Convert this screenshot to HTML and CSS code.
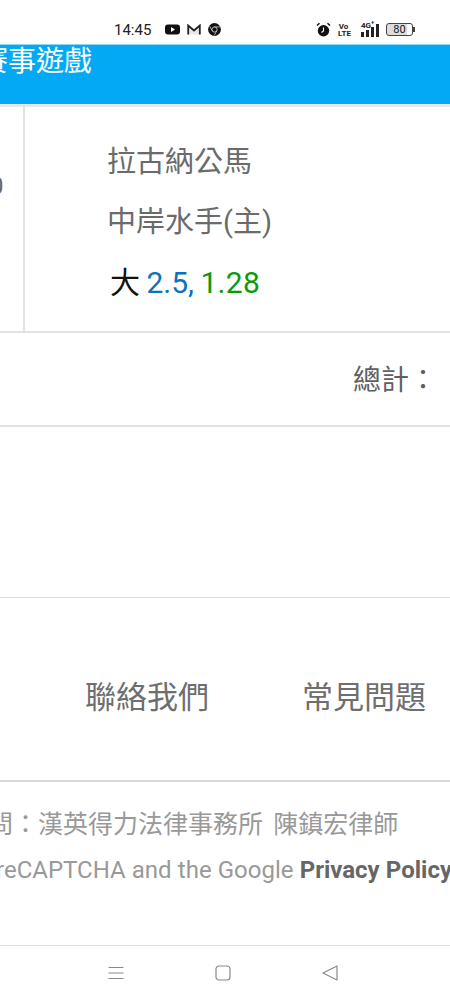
FILE: index.html
```html
<!DOCTYPE html>
<html lang="zh-Hant">

<head>
    <meta charset="UTF-8">
    <meta name="viewport" content="width=device-width, initial-scale=1.0">
    <title>賽事遊戲</title>
    <link rel="stylesheet" href="styles.css">
</head>

<body>
    <div class="phone">
        <div class="statusBar">
            <span class="time">14:45</span>
            <svg class="appIcon ytIcon" width="15" height="11" viewBox="0 0 15 11">
                <rect x="0" y="0.5" width="15" height="10" rx="3" fill="#111" />
                <path d="M6 3 L10 5.5 L6 8 Z" fill="#fff" />
            </svg>
            <svg class="appIcon gmailIcon" width="14" height="11" viewBox="0 0 14 11">
                <path d="M1.2 10.5 V1.5 L7 6.5 L12.8 1.5 V10.5" fill="#e8e8e8" stroke="#222" stroke-width="1.8" />
            </svg>
            <svg class="appIcon chromeIcon" width="13" height="13" viewBox="0 0 13 13">
                <circle cx="6.5" cy="6.5" r="6.4" fill="#111" />
                <circle cx="6.5" cy="6.5" r="2.6" fill="#111" stroke="#ccc" stroke-width="0.9" />
                <path d="M6.5 3.9 H12 M4.2 7.8 L1.6 3.2 M8.8 7.8 L6.2 12.4" stroke="#ccc" stroke-width="0.8" />
            </svg>
            <span class="spacer"></span>
            <svg class="sysIcon" width="15" height="15" viewBox="0 0 15 15">
                <circle cx="7.5" cy="8.8" r="5.7" fill="#111" />
                <path d="M1 3.5 L3.5 1.2 M14 3.5 L11.5 1.2" stroke="#111" stroke-width="1.5" />
                <path d="M7.5 5.5 V9 L5.5 10.5" stroke="#fff" stroke-width="1.1" fill="none" />
            </svg>
            <span class="volte">Vo<br>LTE</span>
            <span class="signal">
                <span class="netType">4G<sup class="netPlus">+</sup></span>
                <svg width="19" height="13" viewBox="0 0 19 13">
                    <rect x="0" y="8" width="3" height="5" fill="#222" />
                    <rect x="5" y="6" width="3" height="7" fill="#222" />
                    <rect x="10" y="3" width="3" height="10" fill="#222" />
                    <rect x="15" y="0" width="3" height="13" fill="#222" />
                </svg>
            </span>
            <span class="battery"><span class="batteryLevel">80</span></span>
            <span class="batteryNub"></span>
        </div>

        <div class="header">
            <h1 class="headerTitle">賽事遊戲</h1>
        </div>

        <div class="betRow">
            <div class="sideCell"><span class="cutNum">0</span></div>
            <div class="betCell">
                <p class="teamName">拉古納公馬</p>
                <p class="teamName">中岸水手(主)</p>
                <p class="odds">大 <span class="oddsBlue">2.5,</span> <span class="oddsGreen">1.28</span></p>
            </div>
        </div>

        <div class="totalRow">總計：</div>
        <div class="emptyRow"></div>

        <div class="footerLinks">
            <a class="footerLink">聯絡我們</a>
            <a class="footerLink">常見問題</a>
        </div>

        <div class="legal">
            <p class="legalLine legalCn">問：漢英得力法律事務所 陳鎮宏律師</p>
            <p class="legalLine legalEn">reCAPTCHA and the Google <b>Privacy Policy</b></p>
        </div>

        <div class="navBar">
            <svg width="16" height="14" viewBox="0 0 16 14">
                <path d="M0.5 1.5 H15.5 M0.5 7 H15.5 M0.5 12.5 H15.5" stroke="#8a8a8a" stroke-width="1" />
            </svg>
            <svg width="16" height="16" viewBox="0 0 16 16">
                <rect x="1" y="1" width="14" height="14" rx="3" fill="none" stroke="#8a8a8a" stroke-width="1.2" />
            </svg>
            <svg width="16" height="16" viewBox="0 0 16 16">
                <path d="M15 1 V15 L1 8 Z" fill="none" stroke="#8a8a8a" stroke-width="1.2" stroke-linejoin="round" />
            </svg>
        </div>
    </div>
</body>

</html>
```

FILE: styles.css
```css
* {
    box-sizing: border-box;
}

html,
body {
    margin: 0;
    padding: 0;
}

body {
    font-family: Roboto, "Noto Sans CJK TC", sans-serif;
    background-color: #fff;
    overflow: hidden;
}

p {
    margin: 0;
}

.phone {
    width: 450px;
    height: 1000px;
    display: flex;
    flex-direction: column;
    overflow: hidden;
}

.statusBar {
    height: 44px;
    padding: 16px 35px 0 114px;
    display: flex;
    align-items: center;
    color: #222;
}

.time {
    font-size: 15px;
    width: 51px;
}

.appIcon {
    margin-right: 7px;
}

.spacer {
    flex: 1;
}

.sysIcon {
    margin-right: 7px;
}

.volte {
    font-size: 8px;
    line-height: 7px;
    font-weight: 700;
    text-align: center;
    width: 11px;
    margin-right: 12px;
}

.signal {
    display: flex;
    align-items: flex-end;
    margin-right: 6px;
}

.netType {
    font-size: 8px;
    font-weight: 700;
    line-height: 8px;
    width: 0;
    margin-bottom: 7px;
    white-space: nowrap;
}

.netPlus {
    font-size: 6px;
    line-height: 0;
}

.battery {
    width: 27px;
    height: 13px;
    border: 1px solid #444;
    border-radius: 3px;
    background: linear-gradient(to right, #ddd 80%, #fff 80%);
    font-size: 11px;
    line-height: 11px;
    text-align: center;
}

.batteryNub {
    width: 2px;
    height: 5px;
    background-color: #444;
}

.header {
    height: 60px;
    background-color: #03a9f4;
    border-top: 1px solid #8fd6ee;
    overflow: hidden;
}

.headerTitle {
    margin: 0 0 0 -20px;
    font-size: 28px;
    font-weight: 400;
    line-height: 34px;
    color: #fff;
}

.betRow {
    height: 229px;
    display: flex;
    border-top: 3px solid #e6e6e6;
    border-bottom: 2px solid #e2e2e2;
}

.sideCell {
    width: 25px;
    border-right: 2px solid #e2e2e2;
    overflow: hidden;
}

.cutNum {
    display: block;
    margin: 65px 0 0 -10px;
    font-size: 24px;
    line-height: 28px;
    color: #666;
}

.betCell {
    flex: 1;
    padding: 38px 0 0 82px;
}

.teamName {
    font-size: 29px;
    line-height: 34px;
    color: #6b6b6b;
    margin-bottom: 26px;
}

.odds {
    font-size: 30px;
    line-height: 36px;
    color: #111;
    margin-left: 3px;
    margin-top: 0;
    word-spacing: -1px;
}

.oddsBlue {
    color: #0b74b8;
}

.oddsGreen {
    color: #0a9a0a;
    letter-spacing: 0.3px;
}

.totalRow {
    height: 94px;
    border-bottom: 2px solid #e2e2e2;
    padding: 28px 13px 0 0;
    text-align: right;
    font-size: 28px;
    line-height: 40px;
    color: #606060;
}

.emptyRow {
    height: 172px;
    border-bottom: 1px solid #dedede;
}

.footerLinks {
    height: 184px;
    border-bottom: 2px solid #d8d8d8;
    display: flex;
    padding: 78px 0 0 85px;
    gap: 93px;
}

.footerLink {
    font-size: 31px;
    line-height: 44px;
    color: #6e6e6e;
}

.legal {
    height: 163px;
    overflow: hidden;
    white-space: nowrap;
}

.legalLine {
    font-size: 24px;
    color: #999;
}

.legalCn {
    margin: 26px 0 0 -12px;
    font-size: 25px;
    line-height: 34px;
    word-spacing: 4px;
}

.legalEn {
    margin: 11px 0 0 -4px;
    line-height: 34px;
    word-spacing: 0.2px;
}

.legalEn b {
    color: #666;
}

.navBar {
    height: 55px;
    border-top: 1px solid #e0e0e0;
    display: flex;
    align-items: center;
    gap: 91px;
    padding-left: 108px;
}
```
